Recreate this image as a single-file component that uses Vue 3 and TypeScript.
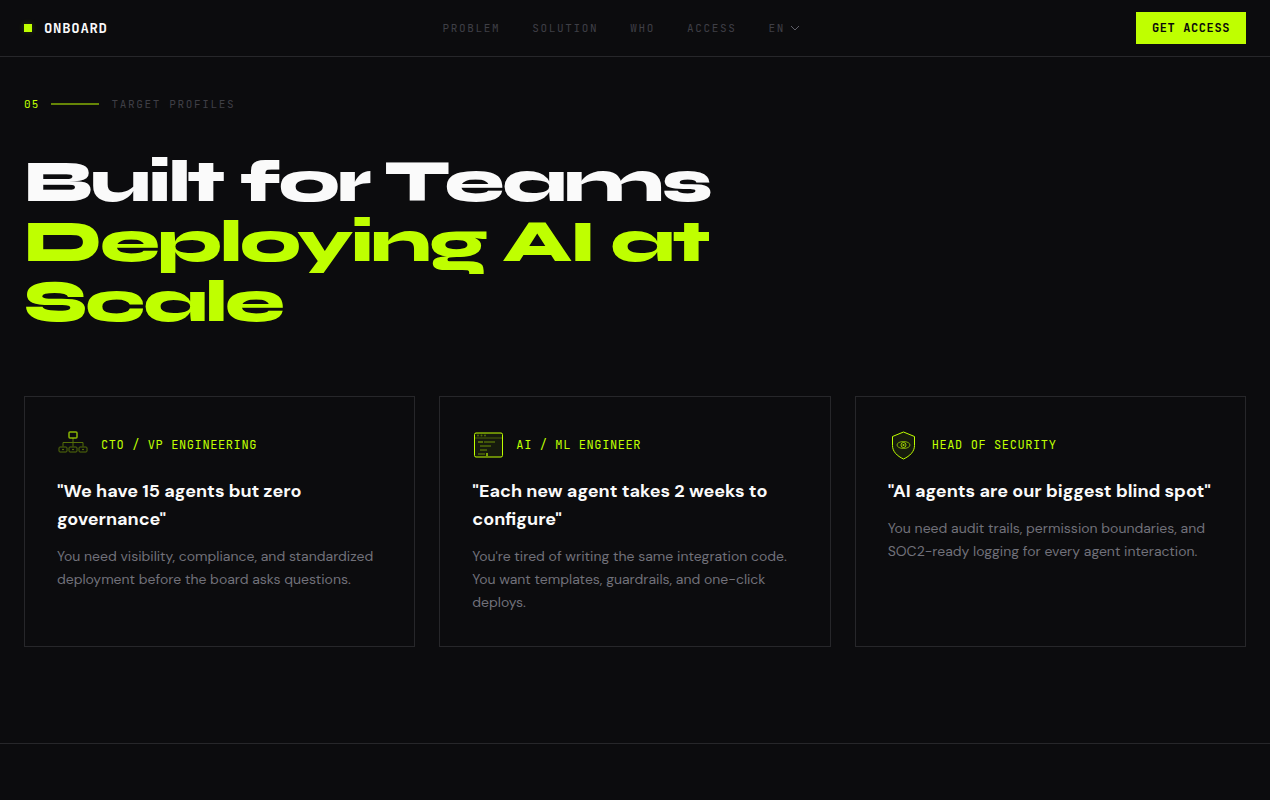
<script setup lang="ts">
interface NavLink {
  label: string
  href: string
}

interface Profile {
  icon: 'org' | 'terminal' | 'shield'
  role: string
  quote: string
  text: string
}

const links: NavLink[] = [
  { label: 'PROBLEM', href: '#problem' },
  { label: 'SOLUTION', href: '#solution' },
  { label: 'WHO', href: '#who' },
  { label: 'ACCESS', href: '#access' },
]

const profiles: Profile[] = [
  {
    icon: 'org',
    role: 'CTO / VP ENGINEERING',
    quote: '"We have 15 agents but zero governance"',
    text: 'You need visibility, compliance, and standardized deployment before the board asks questions.',
  },
  {
    icon: 'terminal',
    role: 'AI / ML ENGINEER',
    quote: '"Each new agent takes 2 weeks to configure"',
    text: "You're tired of writing the same integration code. You want templates, guardrails, and one-click deploys.",
  },
  {
    icon: 'shield',
    role: 'HEAD OF SECURITY',
    quote: '"AI agents are our biggest blind spot"',
    text: 'You need audit trails, permission boundaries, and SOC2-ready logging for every agent interaction.',
  },
]
</script>

<template>
  <div class="page">
    <header class="topbar">
      <a class="brand" href="#top"><span class="brand-mark"></span>ONBOARD</a>
      <nav class="nav" aria-label="Main">
        <a v-for="link in links" :key="link.label" :href="link.href">{{ link.label }}</a>
        <button class="lang" type="button" aria-haspopup="listbox">
          EN
          <svg width="12" height="12" viewBox="0 0 12 12" aria-hidden="true">
            <path d="M2 4l4 4 4-4" fill="none" stroke="currentColor" />
          </svg>
        </button>
      </nav>
      <button class="cta" type="button">GET ACCESS</button>
    </header>

    <main>
      <section id="who" class="section">
        <div class="eyebrow">
          <span class="eyebrow-num">05</span>
          <span class="eyebrow-rule"></span>
          <span class="eyebrow-label">TARGET PROFILES</span>
        </div>
        <h2 class="headline">
          Built for Teams
          <span class="accent">Deploying AI at Scale</span>
        </h2>
        <div class="cards">
          <article v-for="p in profiles" :key="p.role" class="card">
            <div class="card-head">
              <svg v-if="p.icon === 'org'" class="icon" viewBox="0 0 32 32" aria-hidden="true">
                <rect x="12" y="3" width="8" height="6" rx="1" stroke-width="1.500" opacity="0.7" />
                <g opacity="0.4">
                  <path d="M16 9v8.500M6 17.500v-4h20v4" />
                  <rect x="2" y="18" width="8" height="5" rx="1" />
                  <rect x="12" y="18" width="8" height="5" rx="1" />
                  <rect x="22" y="18" width="8" height="5" rx="1" />
                </g>
                <g class="solid" opacity="0.55">
                  <circle cx="6" cy="20.500" r="0.8" />
                  <circle cx="16" cy="20.500" r="0.8" />
                  <circle cx="26" cy="20.500" r="0.8" />
                </g>
              </svg>
              <svg v-else-if="p.icon === 'terminal'" class="icon" viewBox="0 0 32 32" aria-hidden="true">
                <rect class="tint" x="2.500" y="4" width="28" height="24" rx="1.500" />
                <path d="M3 9h27" opacity="0.3" />
                <g class="solid" opacity="0.35">
                  <circle cx="6" cy="6.500" r="1" />
                  <circle cx="9.500" cy="6.500" r="1" />
                  <circle cx="13" cy="6.500" r="1" />
                  <rect x="6" y="12" width="5" height="2" />
                </g>
                <g class="solid" opacity="0.25">
                  <rect x="12" y="12" width="11" height="2" />
                  <rect x="8" y="16" width="11" height="2" />
                  <rect x="8" y="20" width="7" height="2" />
                  <rect x="6" y="24" width="7" height="2" />
                </g>
                <rect class="solid" x="14" y="24" width="2" height="3" opacity="0.6" />
              </svg>
              <svg v-else class="icon" viewBox="0 0 32 32" aria-hidden="true">
                <path class="tint" d="M15.500 3l11 4.500v9c0 6-4.500 10.500-11 13.500c-6.500-3-11-7.500-11-13.500v-9z" />
                <ellipse cx="15.500" cy="16" rx="6.500" ry="3.500" opacity="0.6" />
                <circle cx="15.500" cy="16" r="2.500" opacity="0.75" />
                <circle class="solid" cx="15.500" cy="16" r="1" opacity="0.8" />
              </svg>
              <span class="role">{{ p.role }}</span>
            </div>
            <h3>{{ p.quote }}</h3>
            <p>{{ p.text }}</p>
          </article>
        </div>
      </section>
    </main>
  </div>
</template>

<style>
body {
  margin: 0;
  background: #0c0c0e;
}
</style>

<style scoped>
.page {
  --lime: #bfff00;
  --line: #27272a;
  --mono: 'JetBrains Mono', 'DejaVu Sans Mono', monospace;
  min-height: 100vh;
  background: #0c0c0e;
  color: #fafafa;
  font-family: 'DM Sans', Inter, sans-serif;
}

.topbar {
  display: flex;
  align-items: center;
  justify-content: space-between;
  height: 56px;
  padding: 0 24px;
  border-bottom: 1px solid var(--line);
  font-family: var(--mono);
}

.brand {
  display: flex;
  align-items: center;
  gap: 12px;
  color: #fafafa;
  font-size: 14px;
  font-weight: 600;
  letter-spacing: 0.05em;
  text-decoration: none;
}

.brand-mark {
  width: 8px;
  height: 8px;
  background: var(--lime);
  box-shadow: 0 0 6px rgba(191, 255, 0, 0.2);
}

.nav {
  display: flex;
  align-items: center;
  gap: 32px;
}

.nav a,
.lang {
  color: #3f3f46;
  font-family: var(--mono);
  font-size: 11px;
  line-height: 16px;
  letter-spacing: 0.15em;
  text-decoration: none;
}

.lang {
  display: flex;
  align-items: center;
  gap: 4px;
  padding: 0;
  border: 0;
  background: none;
}

.lang svg {
  color: #5f5f69;
}

.cta {
  height: 32px;
  padding: 0 16px;
  border: 0;
  background: var(--lime);
  color: #0a0a0b;
  font-family: var(--mono);
  font-size: 12px;
  font-weight: 600;
  letter-spacing: 0.05em;
}

.section {
  padding: 39px 24px 96px;
  border-bottom: 1px solid var(--line);
}

.eyebrow {
  display: flex;
  align-items: center;
  gap: 12px;
  margin-bottom: 40px;
  font-family: var(--mono);
  font-size: 11px;
  line-height: 16px;
}

.eyebrow-num {
  color: var(--lime);
  letter-spacing: 0.1em;
}

.eyebrow-rule {
  width: 48px;
  height: 2px;
  background: var(--lime);
  opacity: 0.5;
}

.eyebrow-label {
  color: #3f3f46;
  letter-spacing: 0.15em;
}

.headline {
  max-width: 768px;
  margin: 0 0 64px;
  font-family: Syne, 'DejaVu Sans', sans-serif;
  font-size: 60px;
  font-weight: 800;
  line-height: 60px;
  letter-spacing: -0.03em;
}

.accent {
  display: block;
  color: var(--lime);
}

.cards {
  display: grid;
  grid-template-columns: repeat(3, 1fr);
  gap: 24px;
}

.card {
  padding: 32px;
  border: 1px solid var(--line);
}

.card-head {
  display: flex;
  align-items: center;
  gap: 12px;
  margin-bottom: 16px;
}

.icon {
  width: 32px;
  height: 32px;
  flex: none;
  fill: none;
  stroke: var(--lime);
}

.icon .solid {
  fill: var(--lime);
  stroke: none;
}

.icon .tint {
  fill: rgba(191, 255, 0, 0.06);
}

.role {
  color: var(--lime);
  font-family: var(--mono);
  font-size: 12px;
  letter-spacing: 0.05em;
}

.card h3 {
  margin: 0 0 12px;
  font-size: 18px;
  font-weight: 700;
  line-height: 28px;
}

.card p {
  margin: 0;
  color: #71717a;
  font-size: 14px;
  line-height: 23px;
}
</style>
